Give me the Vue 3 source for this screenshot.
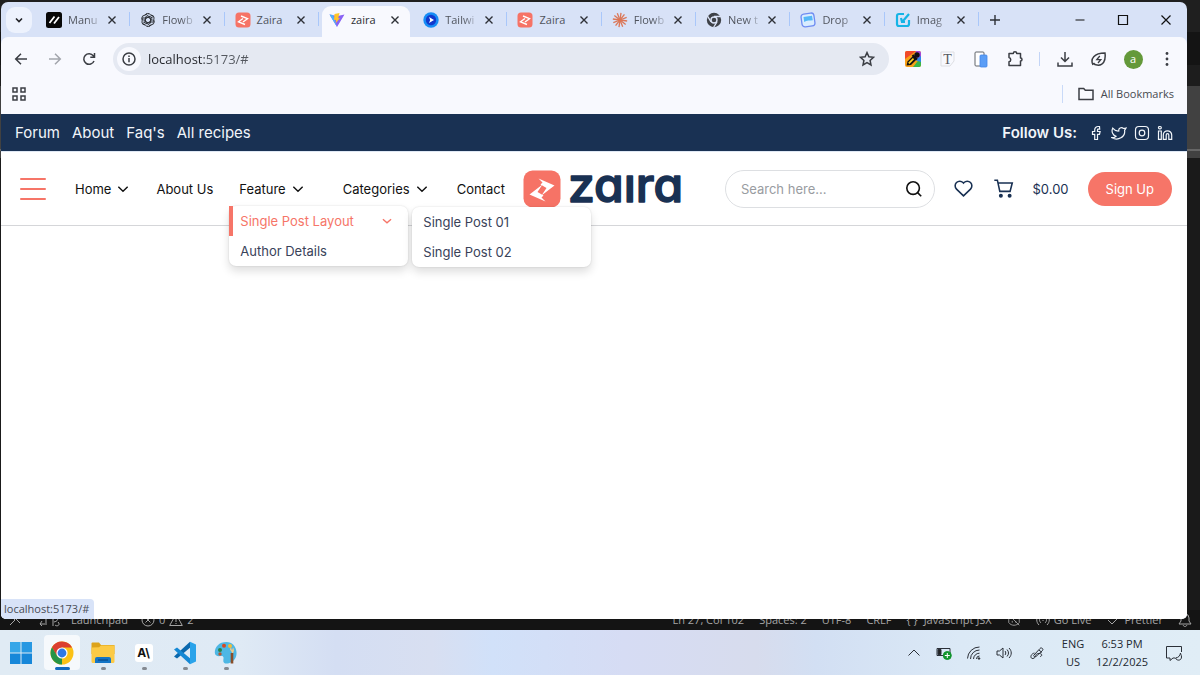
<script setup>
const tabs = [
  { icon: 'slash', title: 'Manu', faded: true },
  { icon: 'knot', title: 'Flowb', faded: true },
  { icon: 'zaira', title: 'Zaira' },
  { icon: 'vite', title: 'zaira', active: true },
  { icon: 'play', title: 'Tailwi', faded: true },
  { icon: 'zaira', title: 'Zaira' },
  { icon: 'burst', title: 'Flowb', faded: true },
  { icon: 'chromium', title: 'New t', faded: true },
  { icon: 'drop', title: 'Drop', faded: true },
  { icon: 'image', title: 'Imag', faded: true }
]
const topLinks = ['Forum', 'About', "Faq's", 'All recipes']
const apps = ['start', 'chrome', 'folder', 'ai', 'code', 'paint']
const rays = Array.from({ length: 12 }, (_, i) => i * 30 + 8)
const petals = [0, 60, 120, 180, 240, 300]
</script>

<template>
  <div class="desktop">
    <div class="workspace">
      <div class="editor-status">
        <svg class="s-remote" viewBox="0 0 14 14"><path d="M2 12 7 7 3 3M12 2 8 6l4 4" /></svg>
        <svg class="s-branch" viewBox="0 0 24 14"><path d="M2 11h5M4 8l-2 3 2 2M8 4v8M15 13V4c5-2 7 4 1 5M20 9c3 3-1 5-3 3" /></svg>
        <span class="s-launch">Launchpad</span>
        <svg class="s-err" viewBox="0 0 14 14"><circle cx="7" cy="7" r="6" /><path d="m4.500 4.500 5 5m0-5-5 5" /></svg>
        <span>0</span>
        <svg class="s-err" viewBox="0 0 14 14"><path d="M7 1 13.300 12.500H.7zM7 5v4m0 1v1" /></svg>
        <span>2</span>
        <div class="s-right">
          <span>Ln 27, Col 102</span><span>Spaces: 2</span><span>UTF-8</span><span>CRLF</span>
          <span class="s-lang"><span>{ }</span><span>JavaScript JSX</span></span>
          <svg class="s-cop" viewBox="0 0 16 14"><path d="M2 6c0-5 4-5 6-2 2-3 6-3 6 2v4c-3 4-9 4-12 0zM6 8v2m4-2v2M2 1l12 12" /></svg>
          <span class="s-pair"><svg viewBox="0 0 14 14"><path d="M3 2c-3 3-3 7 0 10M11 2c3 3 3 7 0 10M5 4c-2 2-2 4 0 6M9 4c2 2 2 4 0 6M7 7v1" /></svg>Go Live</span>
          <span class="s-pair s-pre"><svg viewBox="0 0 14 14"><path d="m2 7 4 4 7-7" /></svg>Prettier</span>
          <svg class="s-bell" viewBox="0 0 14 14"><path d="M1 11h12l-2-3V5a4 4 0 0 0-8 0v3zM5 12c1 2 3 2 4 0" /></svg>
        </div>
      </div>

      <section class="browser">
        <header class="tabstrip">
          <button class="tabsearch" aria-label="Search tabs"><svg viewBox="0 0 12 12"><path d="m3 4.500 3 3 3-3" /></svg></button>
          <nav class="tabs">
            <div v-for="(t, i) in tabs" :key="i" class="tab" :class="{ active: t.active, plain: i === 2 || t.active }">
              <svg class="fav" viewBox="0 0 16 16">
                <g v-if="t.icon === 'slash'"><rect width="16" height="16" rx="2.500" fill="#080808" /><path d="m3.500 11 5-6.500M8 11.500l5-6.500" stroke="#fff" stroke-width="1.800" fill="none" /></g>
                <g v-else-if="t.icon === 'knot'" fill="none" stroke="#30343a" stroke-width="1"><path v-for="a in petals" :key="a" d="M8 5 10.600 6.500V11L7.500 13M5.200 3.200A3 3 0 0 1 10.300 2.600L13 4.200" :transform="`rotate(${a} 8 8)`" /></g>
                <g v-else-if="t.icon === 'zaira'"><rect width="15" height="15" x=".5" y=".5" rx="3.500" fill="#f67366" /><path d="M6 4 12.500 6.700 8 10M10 12.500 3.500 9.800 8 6.500" fill="none" stroke="#fff" stroke-width="1.400" /></g>
                <g v-else-if="t.icon === 'vite'"><path d="M.5 2.500 8 15 15.500 2.500 8.500 4z" fill="#8a63f4" /><path d="M.5 2.500 4 3l4 12z" fill="#4cb4fc" /><path d="m10.500 1-5 1L5 8l2-.3L6.800 11 11 6l-1.800.2z" fill="#ffc629" /></g>
                <g v-else-if="t.icon === 'play'"><circle cx="8" cy="8" r="7.700" fill="#168cf5" /><circle cx="8" cy="8" r="5.200" fill="#1238cc" /><path d="m6 5 5 3-5 3 1.200-3z" fill="#fff" /></g>
                <g v-else-if="t.icon === 'burst'" stroke="#db7656" stroke-width="1.300"><path v-for="a in rays" :key="a" d="M8 8V.8" :transform="`rotate(${a} 8 8)`" /></g>
                <g v-else-if="t.icon === 'chromium'"><circle cx="8" cy="8" r="7.200" fill="#3f4248" /><circle cx="8" cy="8" r="3" fill="#3f4248" stroke="#dce4f7" stroke-width="1.400" /><path d="M8 4.500h7M5 9.800 1.500 4M11 9.800 7.500 15.500" stroke="#dce4f7" stroke-width="1.300" /></g>
                <g v-else-if="t.icon === 'drop'"><rect x="1.500" y="1.500" width="13" height="13" rx="3" fill="#d9ecff" stroke="#6f8cf2" stroke-width="1.300" transform="rotate(-8 8 8)" /><path d="m3.500 5 8.500-1.300.8 4.600c-3 .3-6 0-8.600 1.700z" fill="#55b8f6" /></g>
                <g v-else fill="none" stroke="#16b4e6" stroke-width="2.200"><path d="M9 2H4a2 2 0 0 0-2 2v8a2 2 0 0 0 2 2h8a2 2 0 0 0 2-2V8" /><path d="m6 6 1 4h3M8 9l6-7" /></g>
              </svg>
              <span class="title" :class="{ faded: t.faded }">{{ t.title }}</span>
              <button class="close" aria-label="Close tab"><svg viewBox="0 0 16 16"><path d="m4.500 4.500 7 7m0-7-7 7" /></svg></button>
            </div>
          </nav>
          <button class="newtab" aria-label="New tab"><svg viewBox="0 0 16 16"><path d="M8 3v10M3 8h10" /></svg></button>
          <div class="winbtns">
            <button aria-label="Minimize"><svg viewBox="0 0 12 12"><path d="M1.500 6h9" /></svg></button>
            <button aria-label="Maximize"><svg viewBox="0 0 12 12"><path d="M1.500 1.500h9v9h-9z" /></svg></button>
            <button aria-label="Close"><svg viewBox="0 0 12 12"><path d="m1.500 1.500 9 9m0-9-9 9" /></svg></button>
          </div>
        </header>

        <div class="chrome-body">
          <div class="toolbar">
            <button class="tool" aria-label="Back"><svg viewBox="0 0 18 18"><path d="M15 9H4m5-5.300L3.700 9 9 14.300" /></svg></button>
            <button class="tool dim" aria-label="Forward"><svg viewBox="0 0 18 18"><path d="M3 9h11M9 3.700 14.300 9 9 14.300" /></svg></button>
            <button class="tool" aria-label="Reload"><svg viewBox="0 0 18 18"><path d="M14 11a5.300 5.300 0 1 1-.7-5.200L14.300 7M14.500 3v4.200h-4.200" /></svg></button>
            <div class="omnibox">
              <button class="info" aria-label="Site information"><svg viewBox="0 0 18 18"><circle cx="9" cy="9" r="6" /><path d="M9 8v4.200M9 5.500V7" /></svg></button>
              <input class="url" aria-label="Address" value="localhost:5173/#">
              <button class="star" aria-label="Bookmark"><svg viewBox="0 0 18 18"><path d="m9 2.600 1.900 4.200 4.600.5-3.400 3.100.9 4.600L9 12.700 5 15l.9-4.600-3.400-3.100 4.600-.5z" /></svg></button>
            </div>
            <div class="tools">
              <button class="tool" aria-label="Color picker"><svg class="flat" viewBox="0 0 18 18"><rect x="1" y="1" width="16" height="16" rx="2" fill="#f8a017" /><path d="M1 3a2 2 0 0 1 2-2h9L1 9z" fill="#f04a2a" /><path d="M12 1h3a2 2 0 0 1 2 2v6H9z" fill="#a447d8" /><path d="M17 7v8a2 2 0 0 1-2 2H9z" fill="#39b54a" /><path d="M17 6v6l-6-2z" fill="#2e86e8" /><path d="m2.500 15.500 1-4 5.500-5.500 3.500 3.500L7 15z" fill="#111" /><path d="m4.800 13.300 4.700-4.700" stroke="#ffd21f" stroke-width="1.800" /><path d="m8.500 5 4.500 4.500" stroke="#111" stroke-width="2.200" /><circle cx="13" cy="5" r="2.700" fill="#111" /></svg></button>
              <button class="tool" aria-label="Font tool"><svg viewBox="0 0 18 18"><path d="M3 2h13v9l-4 5H3z" stroke="#dedfe3" stroke-width="1" /><text x="9.500" y="13.500">T</text></svg></button>
              <button class="tool" aria-label="Responsive view"><svg viewBox="0 0 18 18"><rect x="3" y="2" width="9" height="14" rx="1" stroke="#60646b" stroke-width="1" fill="#fff" /><rect x="8" y="5" width="7" height="12" rx="1" fill="#5a9df6" stroke="#4387e8" stroke-width=".8" /></svg></button>
              <button class="tool" aria-label="Extensions"><svg viewBox="0 0 18 18"><path d="M3 3.500h4.300a1.700 1.700 0 0 1 3.400 0H14.500v4.500a1.500 1.500 0 0 1 0 3v4.500H3v-3.700a2.200 2.200 0 0 0 0-4.300z" stroke-linejoin="round" /></svg></button>
              <i class="sep"></i>
              <button class="tool" aria-label="Downloads"><svg viewBox="0 0 18 18"><path d="M9 2v9M5 7.500l4 4 4-4M2 12.500V16h14v-3.500" /></svg></button>
              <button class="tool" aria-label="Energy saver"><svg viewBox="0 0 18 18"><path d="M3 15c-3-6 1-12 12-12 1 8-2 13-8 12-2 0-3-1-3.600-2" /><path d="M9.800 6 6.800 9.600h4L8 13" stroke-width="1.300" /></svg></button>
              <button class="tool" aria-label="Profile"><span class="avatar">a</span></button>
              <button class="tool" aria-label="Menu"><svg class="flat dots" viewBox="0 0 18 18"><circle cx="9" cy="3.500" r="1.400" /><circle cx="9" cy="9" r="1.400" /><circle cx="9" cy="14.500" r="1.400" /></svg></button>
            </div>
          </div>
          <div class="bookmarks">
            <button aria-label="Apps"><svg viewBox="0 0 18 18"><path d="M3 3h4v4H3zM11 3h4v4h-4zM3 11h4v4H3zM11 11h4v4h-4z" /></svg></button>
            <button class="allmarks"><svg viewBox="0 0 18 18"><path d="M2 14.500v-11h4.700l1.600 1.700H16v9.300z" /></svg>All Bookmarks</button>
          </div>
        </div>

        <main class="page">
          <div class="topbar">
            <nav><a v-for="l in topLinks" :key="l" href="#">{{ l }}</a></nav>
            <div class="follow">
              <span>Follow Us:</span>
              <a href="#" aria-label="Facebook"><svg viewBox="0 0 16 16"><path d="M11.500 1.500H10a3.300 3.300 0 0 0-3.300 3.300v1.700H4.500v2.800h2.200v5.200h2.800V9.300h2l.6-2.800H9.500V5c0-.5.200-.8.7-.8h1.500z" /></svg></a>
              <a href="#" aria-label="Twitter"><svg viewBox="0 0 16 16"><path d="M15 3s-.5 1.300-1.400 2.200c1 6.800-6.600 11-12.600 7.500 1.500 0 3-.4 4-1.400C1.500 10.300.2 6.300 1.700 3.200c1.500 1.900 3.800 3 6.100 2.800C7.200 3.200 10.400 1.700 12.500 3.500c.8 0 2.500-.5 2.500-.5z" /></svg></a>
              <a href="#" aria-label="Instagram"><svg viewBox="0 0 16 16"><rect x="1.500" y="1.500" width="13" height="13" rx="3.500" /><circle cx="8" cy="8" r="2.800" /><path d="M11.500 4.500h.1" stroke-width="1.600" /></svg></a>
              <a href="#" aria-label="LinkedIn"><svg viewBox="0 0 16 16"><path d="M1.500 6h2.800v8.300H1.500zM6.300 14.300V10a4.200 4.200 0 0 1 8.400 0v4.300h-2.900V10a1.300 1.300 0 0 0-2.600 0v4.300z" /><rect x="1.500" y="1.500" width="2.800" height="2.300" rx="1" /></svg></a>
            </div>
          </div>

          <div class="header">
            <button class="burger" aria-label="Open menu"><i></i><i></i><i></i></button>
            <nav class="mainnav">
              <a href="#" class="n-home">Home<svg viewBox="0 0 12 12"><path d="m2 4 4 4 4-4" /></svg></a>
              <a href="#" class="n-about">About Us</a>
              <div class="feature">
                <a href="#">Feature<svg viewBox="0 0 12 12"><path d="m2 4 4 4 4-4" /></svg></a>
                <div class="panel">
                  <a href="#" class="on">Single Post Layout<svg viewBox="0 0 12 12"><path d="m2.500 4.500 3.500 3 3.500-3" /></svg></a>
                  <a href="#">Author Details</a>
                  <div class="panel sub">
                    <a href="#">Single Post 01</a>
                    <a href="#">Single Post 02</a>
                  </div>
                </div>
              </div>
              <a href="#" class="n-cat">Categories<svg viewBox="0 0 12 12"><path d="m2 4 4 4 4-4" /></svg></a>
              <a href="#">Contact</a>
            </nav>
            <a href="#" class="logo" aria-label="zaira">
              <svg class="mark" viewBox="0 0 38 38"><rect x=".5" y=".5" width="37" height="37" rx="9" fill="#f67366" /><path d="M15.500 8.500 31.500 15.500 18.500 25.500 23.500 18 17.500 14.500 19.500 12.500zM22.500 31.500 6.500 24.500 19.500 14.500 14.500 22 20.500 25.500 18.500 27.500z" fill="#fff" /></svg>
              <svg class="word" viewBox="0 0 116 38"><text x="1" y="32">zaıra</text></svg>
            </a>
            <form class="search" @submit.prevent>
              <input type="text" placeholder="Search here..." aria-label="Search">
              <button aria-label="Search"><svg viewBox="0 0 20 20"><circle cx="9" cy="9" r="7" /><path d="m14 14 4 4" /></svg></button>
            </form>
            <div class="actions">
              <a href="#" aria-label="Wishlist"><svg viewBox="0 0 24 24"><path d="M12 20.500 4 12.700a5.300 5.300 0 0 1 0-7.500 5.200 5.200 0 0 1 7.400 0l.6.6.6-.6a5.200 5.200 0 0 1 7.400 0 5.300 5.300 0 0 1 0 7.500z" /></svg></a>
              <a href="#" aria-label="Cart"><svg viewBox="0 0 24 24"><path d="M1.500 2.500H5l2.800 12.800h11.700l2.500-9.500H5.800" /><circle cx="9" cy="20.300" r="1.400" fill="#193153" /><circle cx="19" cy="20.300" r="1.400" fill="#193153" /></svg></a>
              <span>$0.00</span>
            </div>
            <button class="signup">Sign Up</button>
          </div>
          <div class="linkhint">localhost:5173/#</div>
        </main>
      </section>
    </div>

    <footer class="taskbar">
      <div class="apps">
        <button v-for="a in apps" :key="a" :aria-label="a" :class="a">
          <svg viewBox="0 0 24 24">
            <g v-if="a === 'start'" fill="#1787d9"><path d="M1 1h10.500v10.500H1z" fill="#36a6e8" /><path d="M12.500 1H23v10.500H12.500z" fill="#2798e2" /><path d="M1 12.500h10.500V23H1zM12.500 12.500H23V23H12.500z" /></g>
            <g v-else-if="a === 'chrome'"><circle cx="12" cy="12" r="11.500" fill="#fbc116" /><path d="M2 6.300A11.500 11.500 0 0 1 22 6.500H12L7 15z" fill="#db3e30" /><path d="M2 6.300 7.200 15l5 2.500L12 23.500A11.500 11.500 0 0 1 2 6.300z" fill="#269447" /><path d="m12 23.500 5-8.500-5 2z" fill="#fbc116" /><circle cx="12" cy="12" r="5.600" fill="#fff" /><circle cx="12" cy="12" r="4.400" fill="#2f79e5" /></g>
            <g v-else-if="a === 'folder'"><path d="M.5 2.500C.5 1.700 1 1.500 2 1.500h6l2 2.500h13.500v9H.5z" fill="#dda31b" /><path d="M.5 6.500 8 6.300 10 4.500h13.500v16a1.500 1.500 0 0 1-1.500 1.500H2a1.500 1.500 0 0 1-1.500-1.500z" fill="#fcca45" /><path d="M4 22v-4a2 2 0 0 1 2-2h12a2 2 0 0 1 2 2v4z" fill="#1575c5" /><path d="M7 19h10" stroke="#0c4f8f" stroke-width="1.400" /></g>
            <g v-else-if="a === 'ai'"><rect x="3" y="3" width="18" height="18" rx="3" fill="#fff" /><text x="11.500" y="16.200">A\</text></g>
            <g v-else-if="a === 'code'"><path d="m17 .8 6 2.700v17L17 23.200z" fill="#2aa3ea" /><path d="M17 .8v6L4 17.500 1 15.500z" fill="#0b69ae" /><path d="M17 23.200v-6L4 6.500 1 8.500z" fill="#1588d4" /></g>
            <g v-else><path d="M12.500 1C5 1 .8 6 .8 11.500c0 3.500 3 4 6 3.500 3-.3 3 1.500 2.500 4C9 22 11 23 14 22.500 20 21 23 16.500 22.500 11 22 5 18 1 12.500 1z" fill="#4db7e4" /><circle cx="6" cy="9" r="2" fill="#27834b" /><circle cx="10" cy="4.800" r="2" fill="#d74824" /><circle cx="16" cy="5" r="2" fill="#f5bc34" /><circle cx="6" cy="13" r="1.700" fill="#b55834" /><path d="M16 8.500c0-1 1-2 1-2v3l1-3 1 3V6.500c1 1 1.500 4-.3 6z" fill="#f2c989" /><path d="M18 12v10.500" stroke="#8a4e29" stroke-width="2.600" /></g>
          </svg>
          <i v-if="a !== 'start'"></i>
        </button>
      </div>
      <div class="tray">
        <button aria-label="Hidden icons"><svg viewBox="0 0 16 16"><path d="m2.500 10.500 5.500-5.500 5.500 5.500" /></svg></button>
        <button aria-label="Battery"><svg viewBox="0 0 16 16"><path d="M1 3.500h13v7H1z" /><path d="M2 4.500h3v5H2z" fill="#222" /><circle cx="11.300" cy="10.500" r="4" fill="#12952e" stroke="#12952e" /><path d="M11.300 8v5m-2.500-2.500h5" stroke="#fff" /></svg></button>
        <button aria-label="Network"><svg viewBox="0 0 16 16"><path d="M1.500 13.500A12 12 0 0 1 13.500 2M4.500 14A9 9 0 0 1 13.500 5M7.500 14a6 6 0 0 1 6-5.800M10.500 14a3 3 0 0 1 3-3" /><circle cx="13" cy="13.500" r=".8" fill="#222" /></svg></button>
        <button aria-label="Volume"><svg viewBox="0 0 16 16"><path d="M1 6v4h2.500L7 13V3L3.500 6zM9 6c1 1 1 3 0 4M11 4.500c2 2 2 5 0 7M13 3c3 3 3 7 0 10" /></svg></button>
        <button class="pen" aria-label="Pen"><svg viewBox="0 0 16 16"><path d="M5 10 11 3.500c1-1.500 4 .3 2.500 2L7 11.500c-1 .8-3.200-.3-2-1.500M5.500 8C1 9 1 14 4 13.500c4-1 1-5 6-5 4 0 3 3 1 3M10 5l3 2.500" /></svg></button>
        <button class="lang"><span>ENG</span><span>US</span></button>
        <button class="clock"><span>6:53 PM</span><span>12/2/2025</span></button>
        <button class="notif" aria-label="Notifications"><svg viewBox="0 0 18 18"><path d="M10 14H8l-3 2.500V14H1.500V2.500h15V8M15.500 9c-.5 3-2 4.500-5 5 1 3 6 3 6-1 0-2-1-3-1-4z" /></svg></button>
      </div>
    </footer>
  </div>
</template>

<style>
body {
  background: #1b1b1b;
}
</style>

<style scoped>
* {
  box-sizing: border-box;
}
.desktop {
  --ui: "Open Sans", "Noto Sans", sans-serif;
  --navy: #193153;
  --coral: #f67568;
  display: flex;
  flex-direction: column;
  min-height: 100vh;
  font-family: var(--ui);
  font-size: 12px;
}
button {
  border: 0;
  padding: 0;
  background: none;
  font: inherit;
  color: inherit;
  display: flex;
  align-items: center;
  justify-content: center;
}
a {
  color: inherit;
  text-decoration: none;
}
svg {
  display: block;
  flex: none;
}
.workspace {
  flex: 1;
  display: grid;
  grid-template-columns: minmax(0, 1fr);
  background: linear-gradient(#1f1f1f 32px, #141414 32px, #141414 65px, #1d1d1d 65px, #1d1d1d 86px, #414141 86px, #414141 149px, #666 149px, #666 151px, #414141 151px, #414141 158px, #1a1a1a 158px);
}
.editor-status {
  grid-area: 1 / 1;
  align-self: end;
  height: 20px;
  padding: 0 8px;
  display: flex;
  align-items: center;
  background: #141414;
  color: #a5a5a5;
  font-size: 11px;
  line-height: 20px;
  white-space: nowrap;
}
.editor-status svg {
  width: 14px;
  height: 14px;
  fill: none;
  stroke: #a5a5a5;
  stroke-width: 1;
}
.editor-status .s-branch {
  width: 24px;
  margin-left: 16px;
}
.s-launch {
  margin: 0 13px 0 9px;
}
.s-err {
  margin-right: 4px;
}
.s-err + span {
  margin-right: 4px;
}
.s-right {
  margin-left: auto;
  display: flex;
  align-items: center;
  gap: 15px;
}
.s-lang,
.s-pair {
  display: flex;
  align-items: center;
  gap: 6px;
}
.s-pair {
  gap: 4px;
}

.browser {
  grid-area: 1 / 1;
  margin: 2px 13px 11px 1px;
  display: flex;
  flex-direction: column;
  border-radius: 7px 7px 5px 5px;
  overflow: hidden;
  background: #d8e2f7;
}
.tabstrip {
  height: 35px;
  padding-left: 5px;
  display: flex;
  align-items: center;
}
.tabsearch {
  flex: none;
  width: 26px;
  height: 26px;
  border-radius: 9px;
  background: #edf2fd;
}
.tabsearch svg {
  width: 12px;
  height: 12px;
  fill: none;
  stroke: #202226;
  stroke-width: 1.6;
}
.tabs {
  flex: 1;
  min-width: 0;
  align-self: stretch;
  margin-left: 4px;
  display: flex;
}
.tab {
  flex: 1 1 0;
  min-width: 0;
  padding: 0 10px;
  display: flex;
  align-items: center;
  position: relative;
  color: #50545d;
}
.tab::after {
  content: "";
  position: absolute;
  right: 0;
  top: 10px;
  width: 1px;
  height: 14px;
  background: #a9c7fa;
}
.tab.active::after {
  display: none;
}
.tab.active {
  z-index: 1;
  color: #2b2d31;
}
.tab.active::before {
  content: "";
  position: absolute;
  inset: 4px 3px 0;
  border-radius: 9px 9px 0 0;
  background: #f8f9fe;
  box-shadow: 0 6px 0 #f8f9fe;
}
.fav {
  width: 16px;
  height: 16px;
  position: relative;
}
.title {
  flex: 1;
  min-width: 0;
  margin: 1px 0 0 6px;
  font-size: 11px;
  line-height: 18px;
  white-space: nowrap;
  position: relative;
}
.title.faded {
  mask-image: linear-gradient(90deg, #000 50%, #0002 90%);
}
.close {
  flex: none;
  width: 16px;
  height: 16px;
  position: relative;
}
.close svg,
.newtab svg {
  width: 16px;
  height: 16px;
  fill: none;
  stroke: #2d3036;
  stroke-width: 1.4;
}
.newtab {
  flex: none;
  width: 32px;
  height: 26px;
}
.winbtns {
  flex: none;
  display: flex;
  margin-left: 47px;
}
.winbtns button {
  width: 43px;
  height: 34px;
}
.winbtns svg {
  width: 12px;
  height: 12px;
  fill: none;
  stroke: #111;
  stroke-width: 1.2;
}
.chrome-body {
  background: #f8f9fe;
  border-radius: 7px 7px 0 0;
}
.toolbar {
  height: 44px;
  padding: 0 3px;
  display: flex;
  align-items: center;
}
.tool {
  width: 34px;
  height: 34px;
}
.tool svg,
.info svg,
.star svg,
.bookmarks svg {
  width: 18px;
  height: 18px;
  fill: none;
  stroke: #3b3e44;
  stroke-width: 1.5;
}
.tool .flat {
  stroke: none;
}
.tool .dots {
  fill: #3b3e44;
}
.tool.dim svg {
  stroke: #a3a6ad;
}
.tool text {
  font: 14px "Liberation Serif", serif;
  text-anchor: middle;
  fill: #55585e;
  stroke: none;
}
.omnibox {
  flex: 1;
  height: 32px;
  margin: 0 7px;
  padding: 0 13px 0 4px;
  display: flex;
  align-items: center;
  border-radius: 16px;
  background: #e5e9f2;
}
.info {
  width: 24px;
  height: 24px;
  border-radius: 50%;
  background: #f8f9fe;
}
.url {
  flex: 1;
  min-width: 0;
  border: 0;
  padding: 0 0 0 7px;
  font: 13px/20px var(--ui);
  color: transparent;
  background: linear-gradient(90deg, #24262b 63px, #54585f 63px) text;
  outline: 0;
}
.tools {
  display: flex;
  align-items: center;
}
.sep {
  width: 1px;
  height: 14px;
  margin: 0 8px 0 7px;
  background: #c3d5f7;
}
.avatar {
  width: 19px;
  height: 19px;
  border-radius: 50%;
  background: #64993a;
  color: #fff;
  font-size: 11px;
  line-height: 18px;
}
.bookmarks {
  height: 33px;
  padding: 0 13px 8px 9px;
  display: flex;
  align-items: center;
  justify-content: space-between;
  color: #474a50;
}
.allmarks {
  gap: 6px;
  padding-left: 14px;
  border-left: 1px solid #c9daf8;
  font-size: 11px;
  line-height: 14px;
}

.page {
  flex: 1;
  position: relative;
  background: #fff;
  font-family: Inter, sans-serif;
}
.topbar {
  height: 37px;
  padding: 0 14px;
  display: flex;
  align-items: center;
  justify-content: space-between;
  background: var(--navy);
  color: #f1f5fa;
  font-size: 15px;
  line-height: 20px;
}
.topbar nav {
  display: flex;
  gap: 12px;
}
.follow {
  display: flex;
  align-items: center;
  gap: 7px;
  font-weight: 600;
}
.follow span {
  margin-right: 4px;
}
.follow svg {
  width: 16px;
  height: 16px;
  fill: none;
  stroke: #f1f5fa;
  stroke-width: 1.2;
}
.header {
  height: 75px;
  padding: 0 15px 0 19px;
  display: flex;
  align-items: center;
  border-top: 1px solid #dfe8f4;
  border-bottom: 1px solid #d5d6d9;
  font-size: 13px;
  line-height: 20px;
  white-space: nowrap;
}
.burger {
  width: 26px;
  flex-direction: column;
  gap: 8px;
}
.burger i {
  width: 100%;
  height: 2px;
  border-radius: 1px;
  background: var(--coral);
}
.mainnav {
  display: flex;
  margin-left: 29px;
  color: #111;
}
.mainnav > a,
.feature > a {
  display: flex;
  align-items: center;
  gap: 5px;
}
.mainnav svg {
  width: 14px;
  height: 14px;
  fill: none;
  stroke: currentColor;
  stroke-width: 1.2;
}
.n-home,
.n-about {
  margin-right: 26px;
}
.n-cat {
  margin-right: 28px;
}
.feature {
  position: relative;
  margin-right: 38px;
}
.panel {
  position: absolute;
  z-index: 2;
  left: -10px;
  top: 27px;
  width: 179px;
  border-radius: 7px;
  background: #fff;
  color: #394259;
  box-shadow: 0 0 2px #0002, 0 5px 10px #0002;
}
.panel > a {
  display: flex;
  align-items: center;
  justify-content: space-between;
  height: 30px;
  padding: 0 14px 0 11px;
}
.panel > a.on {
  padding-left: 7px;
  border-left: 4px solid var(--coral);
  color: var(--coral);
}
.panel.sub {
  left: 183px;
  top: 1px;
}
.logo {
  display: flex;
  align-items: center;
  margin-left: 18px;
}
.mark {
  width: 38px;
  height: 38px;
}
.word {
  width: 116px;
  height: 38px;
  margin-left: 6px;
}
.word text {
  font: 500 48px Inter, sans-serif;
  font-feature-settings: "cv11";
  fill: var(--navy);
  stroke: var(--navy);
  stroke-width: 1.5;
  stroke-linejoin: round;
}
.search {
  flex: 1;
  min-width: 0;
  height: 38px;
  margin-left: 42px;
  padding: 0 11px 0 15px;
  display: flex;
  align-items: center;
  border: 1px solid #dddfe2;
  border-radius: 19px;
}
.search input {
  flex: 1;
  min-width: 0;
  border: 0;
  padding: 0;
  outline: 0;
  background: none;
  font: 13px/20px Inter, sans-serif;
}
.search input::placeholder {
  color: #999ca1;
}
.search svg {
  width: 18px;
  height: 18px;
  fill: none;
  stroke: #111;
  stroke-width: 1.8;
}
.actions {
  display: flex;
  align-items: center;
  gap: 19px;
  margin: 0 19px 0 18px;
  color: var(--navy);
}
.actions svg {
  width: 21px;
  height: 21px;
  fill: none;
  stroke: var(--navy);
  stroke-width: 1.8;
}
.signup {
  height: 34px;
  padding: 0 18px;
  border-radius: 17px;
  background: var(--coral);
  color: #fff;
}
.linkhint {
  position: absolute;
  left: 0;
  bottom: 0;
  padding: 0 5px 0 3px;
  border-radius: 0 4px 0 0;
  background: #d8e3f8;
  color: #484c55;
  font: 11px/20px var(--ui);
}

.taskbar {
  height: 45px;
  display: flex;
  justify-content: space-between;
  background: linear-gradient(90deg, #e0ebf4, #dfeaf5 20%, #d4def3 28%, #d8dff1 36%, #d1e1f9 41%, #d6dcf4 52%, #d7dced 63%, #d2dff3 68%, #dbe9f6 80%, #e0edf6);
  color: #222831;
}
.apps,
.tray {
  display: flex;
  align-items: center;
}
.apps {
  padding-left: 2px;
}
.apps button {
  width: 36px;
  height: 35px;
  margin-left: 5px;
  position: relative;
  border-radius: 4px;
}
.apps button:first-child {
  margin-left: 1px;
}
.apps .chrome {
  background: #f6f9fc;
}
.apps svg {
  width: 24px;
  height: 24px;
}
.apps text {
  font: 700 12px Inter, sans-serif;
  text-anchor: middle;
  fill: #111;
}
.apps i {
  position: absolute;
  bottom: 0;
  width: 5px;
  height: 3px;
  border-radius: 2px;
  background: #858a91;
}
.apps .chrome i {
  width: 15px;
  background: #1269bd;
}
.tray {
  padding-right: 5px;
}
.tray button {
  width: 30px;
  height: 100%;
}
.tray svg {
  width: 16px;
  height: 16px;
  fill: none;
  stroke: #2b3038;
  stroke-width: 1;
}
.tray .pen,
.tray .lang {
  width: 36px;
}
.tray .lang,
.tray .clock {
  flex-direction: column;
  font-size: 11px;
  line-height: 18px;
}
.tray .clock {
  width: 62px;
}
.tray .notif {
  width: 42px;
}
.tray .notif svg {
  width: 18px;
  height: 18px;
}
</style>
